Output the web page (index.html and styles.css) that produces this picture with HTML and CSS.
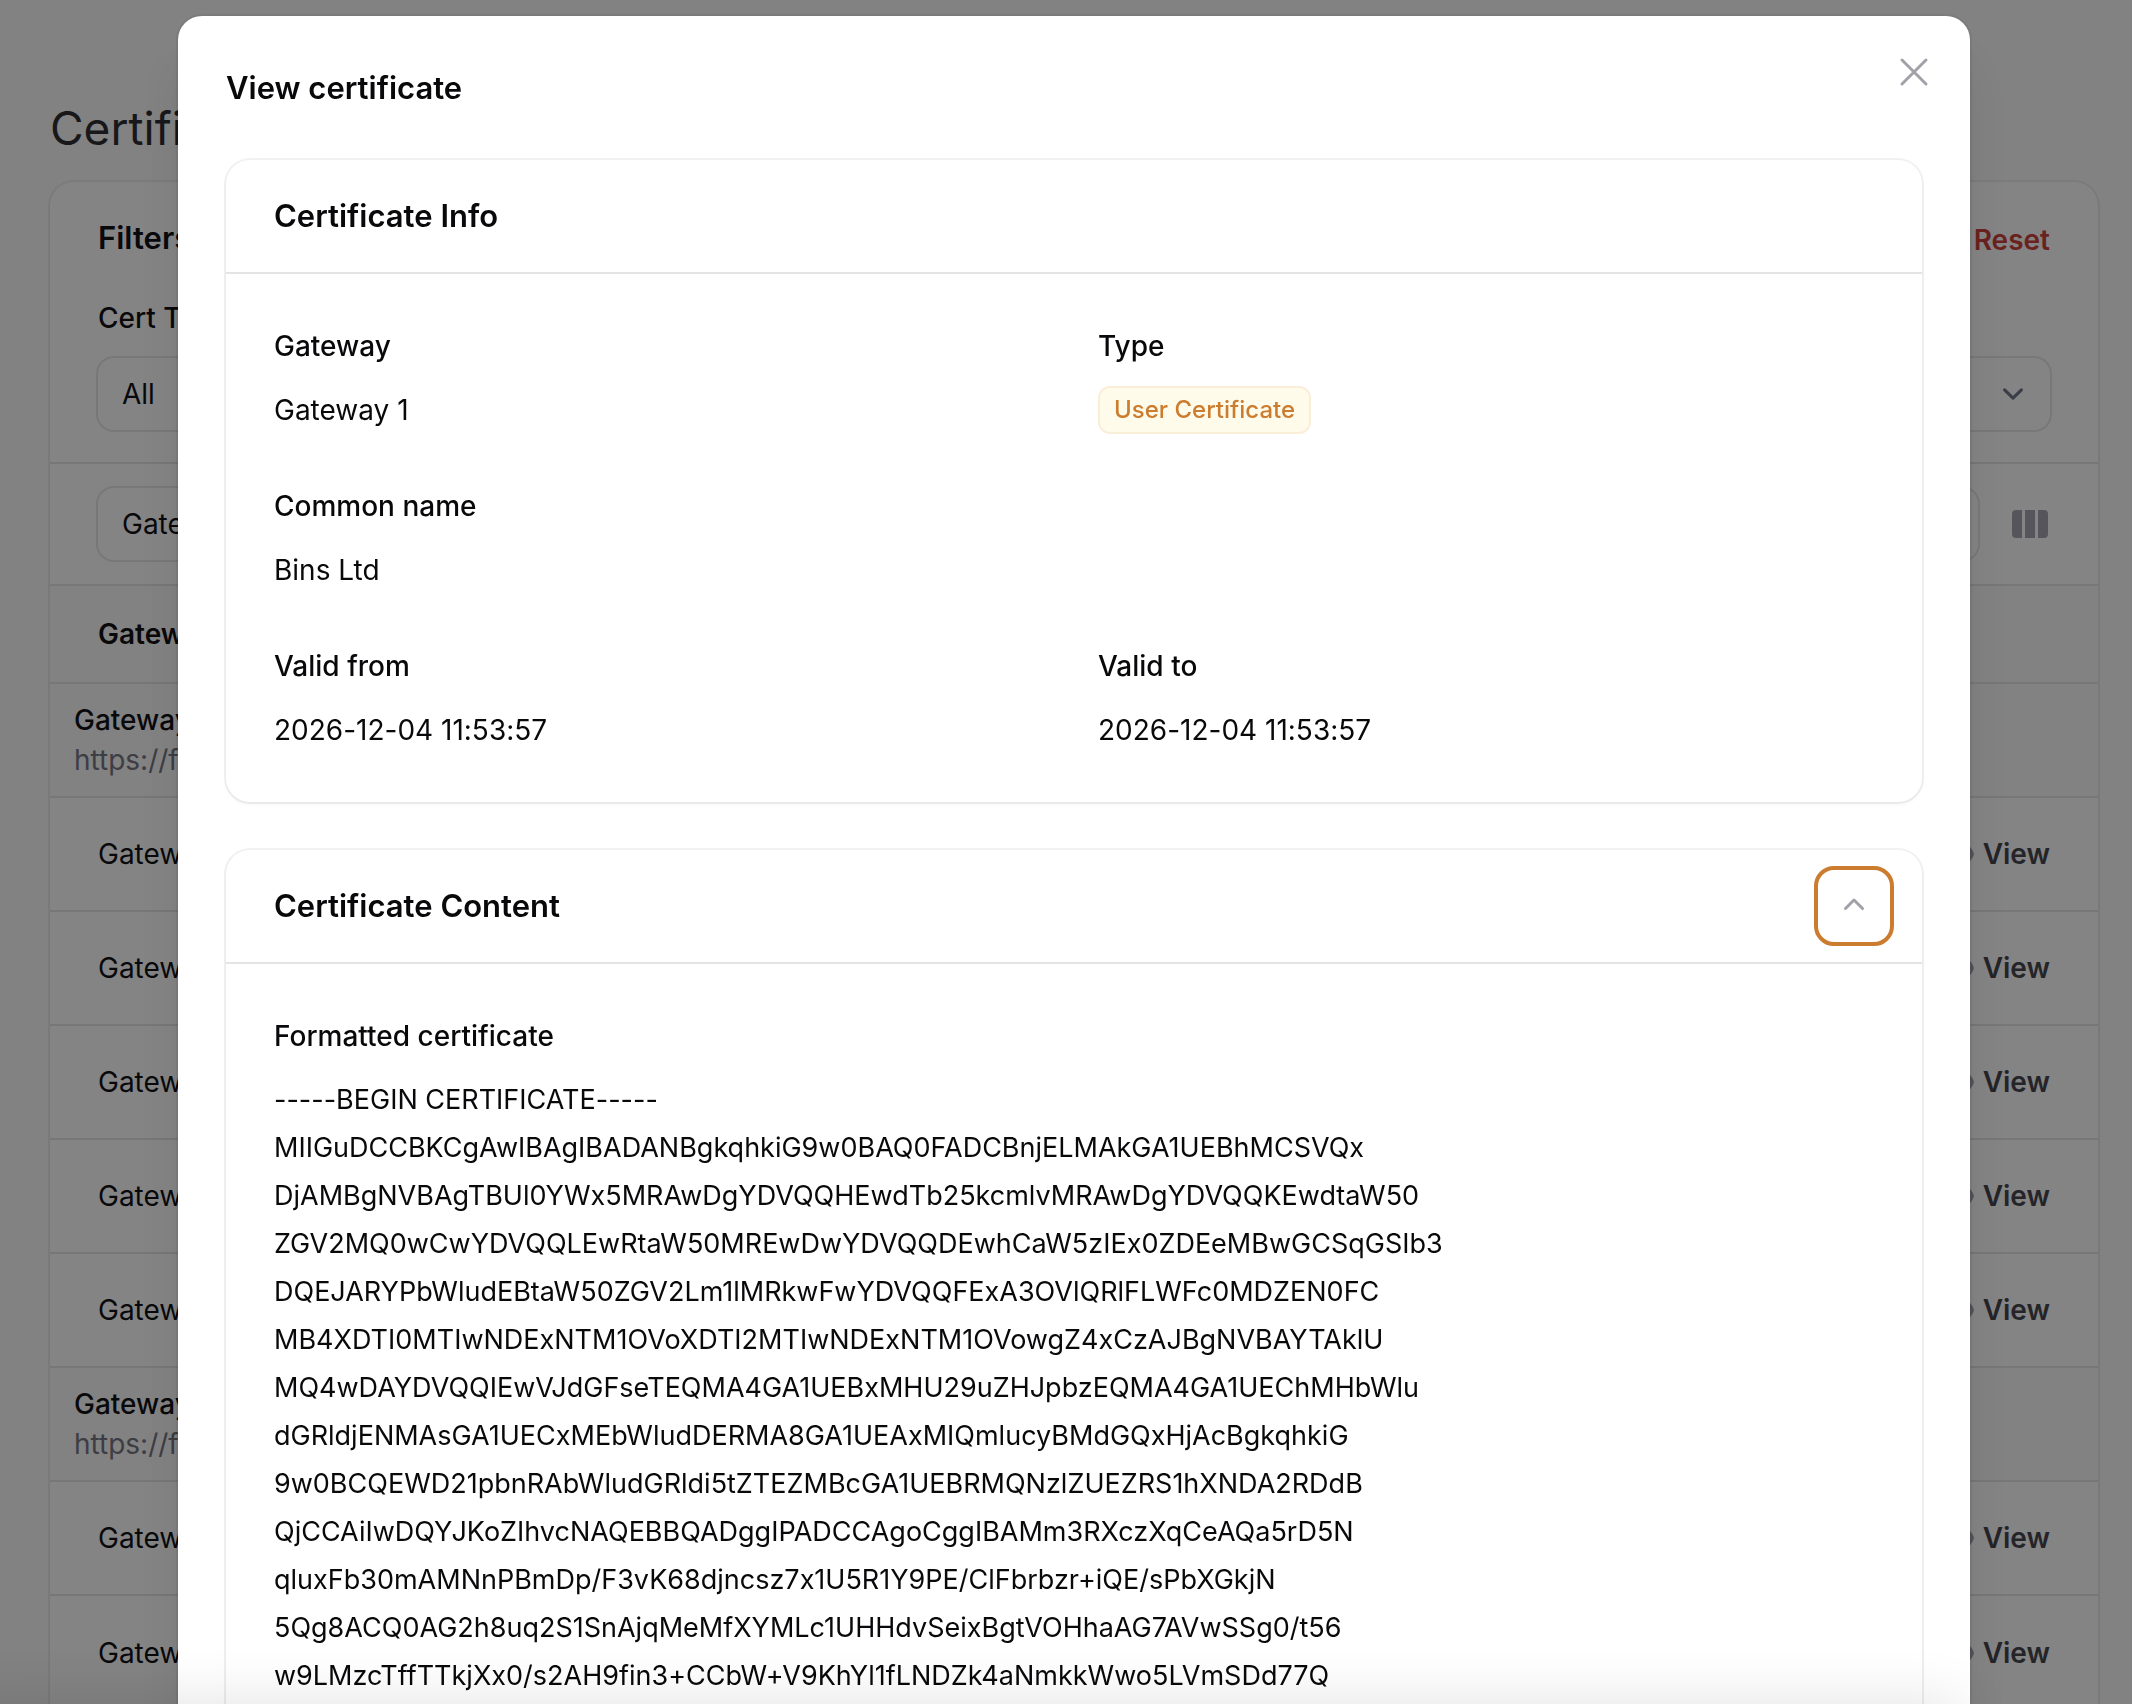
FILE: index.html
```html
<!DOCTYPE html>
<html lang="en">
<head>
<meta charset="utf-8">
<meta name="viewport" content="width=device-width, initial-scale=1">
<title>Certificates</title>
<link rel="stylesheet" href="styles.css">
</head>
<body>
<svg class="sprite" aria-hidden="true">
  <symbol id="eye" viewBox="0 0 20 20">
    <path d="M10 12.5a2.500 2.500 0 1 0 0-5 2.500 2.500 0 0 0 0 5Z"/>
    <path fill-rule="evenodd" d="M.664 10.590a1.651 1.651 0 0 1 0-1.186A10.004 10.004 0 0 1 10 3c4.257 0 7.893 2.660 9.336 6.410.147.381.146.804 0 1.186A10.004 10.004 0 0 1 10 17c-4.257 0-7.893-2.660-9.336-6.410ZM14 10a4 4 0 1 1-8 0 4 4 0 0 1 8 0Z"/>
  </symbol>
</svg>

<main class="page">
  <h1 class="page-title">Certificates</h1>
  <section class="panel">
    <div class="filters">
      <div class="filters-head">
        <h2 class="heading">Filters</h2>
        <button class="reset" type="button">Reset</button>
      </div>
      <label class="label" for="cert-type">Cert Type</label>
      <div class="select-wrap">
        <select class="select" id="cert-type"><option>All</option></select>
        <svg class="chevron" viewBox="0 0 20 20" aria-hidden="true"><path d="M6 8l4 4 4-4"/></svg>
      </div>
    </div>
    <div class="toolbar">
      <div class="select-wrap">
        <select class="select" aria-label="Group by"><option>Gateway</option></select>
        <svg class="chevron" viewBox="0 0 20 20" aria-hidden="true"><path d="M6 8l4 4 4-4"/></svg>
      </div>
      <button class="columns" type="button" aria-label="Toggle columns">
        <svg width="36" height="28" viewBox="0 0 36 28" aria-hidden="true"><path d="M4 0h6v28H4a4 4 0 0 1-4-4V4a4 4 0 0 1 4-4ZM13 0h10v28H13ZM26 0h6a4 4 0 0 1 4 4v20a4 4 0 0 1-4 4h-6Z"/></svg>
      </button>
    </div>
    <table class="table">
      <thead><tr><th>Gateway</th><th></th></tr></thead>
      <tbody>
        <tr class="group"><td colspan="2"><div class="group-title">Gateway 1</div><div class="group-url">https://fa</div></td></tr>
        <tr><td>Gateway 1</td><td><button class="view" type="button"><svg aria-hidden="true"><use href="#eye"/></svg>View</button></td></tr>
        <tr><td>Gateway 1</td><td><button class="view" type="button"><svg aria-hidden="true"><use href="#eye"/></svg>View</button></td></tr>
        <tr><td>Gateway 1</td><td><button class="view" type="button"><svg aria-hidden="true"><use href="#eye"/></svg>View</button></td></tr>
        <tr><td>Gateway 1</td><td><button class="view" type="button"><svg aria-hidden="true"><use href="#eye"/></svg>View</button></td></tr>
        <tr><td>Gateway 1</td><td><button class="view" type="button"><svg aria-hidden="true"><use href="#eye"/></svg>View</button></td></tr>
        <tr class="group"><td colspan="2"><div class="group-title">Gateway 2</div><div class="group-url">https://fa</div></td></tr>
        <tr><td>Gateway 2</td><td><button class="view" type="button"><svg aria-hidden="true"><use href="#eye"/></svg>View</button></td></tr>
        <tr><td>Gateway 2</td><td><button class="view" type="button"><svg aria-hidden="true"><use href="#eye"/></svg>View</button></td></tr>
      </tbody>
    </table>
  </section>
</main>

<div class="overlay">
  <div class="modal" role="dialog" aria-modal="true" aria-labelledby="modal-title">
    <button class="close" type="button" aria-label="Close">
      <svg viewBox="0 0 24 24" aria-hidden="true"><path d="M6 18L18 6M6 6l12 12"/></svg>
    </button>
    <h2 class="heading" id="modal-title">View certificate</h2>

    <section class="card">
      <header class="card-head"><h3 class="heading">Certificate Info</h3></header>
      <dl class="entries">
        <div class="entry"><dt>Gateway</dt><dd>Gateway 1</dd></div>
        <div class="entry"><dt>Type</dt><dd><span class="badge">User Certificate</span></dd></div>
        <div class="entry wide"><dt>Common name</dt><dd>Bins Ltd</dd></div>
        <div class="entry"><dt>Valid from</dt><dd>2026-12-04 11:53:57</dd></div>
        <div class="entry"><dt>Valid to</dt><dd>2026-12-04 11:53:57</dd></div>
      </dl>
    </section>

    <section class="card">
      <header class="card-head">
        <h3 class="heading">Certificate Content</h3>
        <button class="collapse" type="button" aria-label="Collapse" aria-expanded="true">
          <svg viewBox="0 0 20 20" aria-hidden="true"><path fill-rule="evenodd" d="M9.470 6.470a.750.750 0 0 1 1.060 0l4.250 4.250a.750.750 0 1 1-1.060 1.060L10 8.060l-3.720 3.720a.750.750 0 0 1-1.060-1.060l4.250-4.250Z"/></svg>
        </button>
      </header>
      <dl class="entries">
        <div class="entry wide">
          <dt>Formatted certificate</dt>
          <dd class="pem">-----BEGIN CERTIFICATE-----<br>
MIIGuDCCBKCgAwIBAgIBADANBgkqhkiG9w0BAQ0FADCBnjELMAkGA1UEBhMCSVQx<br>
DjAMBgNVBAgTBUl0YWx5MRAwDgYDVQQHEwdTb25kcmlvMRAwDgYDVQQKEwdtaW50<br>
ZGV2MQ0wCwYDVQQLEwRtaW50MREwDwYDVQQDEwhCaW5zIEx0ZDEeMBwGCSqGSIb3<br>
DQEJARYPbWludEBtaW50ZGV2Lm1lMRkwFwYDVQQFExA3OVlQRlFLWFc0MDZEN0FC<br>
MB4XDTI0MTIwNDExNTM1OVoXDTI2MTIwNDExNTM1OVowgZ4xCzAJBgNVBAYTAklU<br>
MQ4wDAYDVQQIEwVJdGFseTEQMA4GA1UEBxMHU29uZHJpbzEQMA4GA1UEChMHbWlu<br>
dGRldjENMAsGA1UECxMEbWludDERMA8GA1UEAxMIQmlucyBMdGQxHjAcBgkqhkiG<br>
9w0BCQEWD21pbnRAbWludGRldi5tZTEZMBcGA1UEBRMQNzlZUEZRS1hXNDA2RDdB<br>
QjCCAiIwDQYJKoZIhvcNAQEBBQADggIPADCCAgoCggIBAMm3RXczXqCeAQa5rD5N<br>
qluxFb30mAMNnPBmDp/F3vK68djncsz7x1U5R1Y9PE/ClFbrbzr+iQE/sPbXGkjN<br>
5Qg8ACQ0AG2h8uq2S1SnAjqMeMfXYMLc1UHHdvSeixBgtVOHhaAG7AVwSSg0/t56<br>
w9LMzcTffTTkjXx0/s2AH9fin3+CCbW+V9KhYl1fLNDZk4aNmkkWwo5LVmSDd77Q</dd>
        </div>
      </dl>
    </section>
  </div>
</div>
<div class="bottom-fade"></div>
</body>
</html>
```
FILE: styles.css
```css
* { box-sizing: border-box; }

body {
  margin: 0;
  height: 100vh;
  overflow: hidden;
  background: #fafafa;
  color: #09090b;
  font: 400 28px/48px Inter, sans-serif;
  font-feature-settings: "calt" 0;
}

h1, h2, h3, dl, dd { margin: 0; }

button, select { font: inherit; color: inherit; }

button {
  display: flex;
  align-items: center;
  padding: 0;
  border: 0;
  background: none;
}

.sprite { position: absolute; width: 0; height: 0; }

.heading { font-size: 31px; line-height: 48px; font-weight: 600; }

/* Certificates list */
.page { padding: 96px 34px 0 50px; }

.page-title {
  margin-bottom: 22px;
  font-size: 46px;
  line-height: 64px;
  font-weight: 400;
  color: #27272a;
}

.panel {
  overflow: hidden;
  padding-bottom: 48px;
  border-radius: 24px;
  background: #fff;
  box-shadow: 0 0 0 2px rgba(9, 9, 11, .05), 0 2px 4px rgba(0, 0, 0, .05);
}

.filters { padding: 32px 48px; }

.filters-head {
  display: flex;
  justify-content: space-between;
  align-items: flex-end;
  margin-bottom: 32px;
}

.reset { font-weight: 600; line-height: 44px; color: #cb3a33; }

.label { display: block; margin-bottom: 16px; line-height: 48px; font-weight: 500; }

.select-wrap { position: relative; flex: 1; }

.select {
  display: block;
  width: 100%;
  height: 72px;
  padding: 0 24px;
  border: 0;
  border-radius: 16px;
  background: #fff;
  box-shadow: 0 0 0 2px rgba(9, 9, 11, .1);
  appearance: none;
}

.chevron {
  position: absolute;
  top: 15px;
  right: 16px;
  width: 42px;
  height: 42px;
  fill: none;
  stroke: #6b7280;
  stroke-width: 1.5;
  stroke-linecap: round;
  stroke-linejoin: round;
}

.toolbar {
  display: flex;
  align-items: center;
  gap: 34px;
  padding: 24px 50px 24px 48px;
  border-top: 2px solid #e4e4e7;
}

.columns { fill: #a1a1aa; }

.table { width: 100%; border-collapse: collapse; }
.table th, .table td { border-top: 2px solid #e4e4e7; padding: 0 48px; text-align: left; }
.table th { height: 98px; background: #fafafa; font-weight: 600; }
.table td { height: 114px; }
.table .group td { padding: 0 24px; background: #fafafa; line-height: 40px; }
.group-title { font-weight: 500; }
.group-url { color: #71717a; }

.view { gap: 8px; margin-left: auto; font-weight: 600; color: #3f3f46; }
.view svg { width: 40px; height: 40px; fill: #a1a1aa; }

/* Dialog */
.overlay {
  position: fixed;
  inset: 0;
  overflow: hidden;
  padding: 16px 0 0 16px;
  background: rgba(9, 9, 11, .5);
}

.modal {
  position: relative;
  display: flex;
  flex-direction: column;
  gap: 48px;
  max-width: 1792px;
  margin: 0 auto;
  padding: 48px;
  border-radius: 24px;
  background: #fff;
  box-shadow: 0 0 0 2px rgba(9, 9, 11, .05), 0 40px 50px -10px rgba(0, 0, 0, .1), 0 16px 20px -12px rgba(0, 0, 0, .1);
}

.close { position: absolute; top: 32px; right: 32px; }
.close svg { width: 48px; height: 48px; fill: none; stroke: #a1a1aa; stroke-width: 1.5; stroke-linecap: round; }

.card {
  border-radius: 24px;
  background: #fff;
  box-shadow: 0 0 0 2px rgba(9, 9, 11, .05), 0 2px 4px rgba(0, 0, 0, .05);
}

.card-head {
  display: flex;
  align-items: center;
  justify-content: space-between;
  height: 112px;
  padding: 0 28px 0 48px;
}

.collapse {
  justify-content: center;
  width: 80px;
  height: 80px;
  border: 4px solid #cc7c2e;
  border-radius: 20px;
}
.collapse svg { width: 40px; height: 40px; fill: #a1a1aa; }

.entries {
  display: grid;
  grid-template-columns: 1fr 1fr;
  gap: 48px;
  padding: 48px;
  border-top: 2px solid #e4e4e7;
}

.entry { display: flex; flex-direction: column; gap: 16px; }
.wide { grid-column: 1 / -1; }
.entry dt { font-weight: 500; }
.pem { font-size: 27px; }

.badge {
  display: block;
  width: max-content;
  padding: 8px 16px;
  border-radius: 12px;
  background: #fffbeb;
  box-shadow: inset 0 0 0 2px rgba(204, 124, 46, .1);
  color: #cc7c2e;
  font-size: 24px;
  line-height: 32px;
  font-weight: 500;
}

/* Soft shadow along the bottom edge of the window */
.bottom-fade {
  position: fixed;
  inset: auto 10% 0 0;
  height: 0;
  box-shadow: 0 40px 60px 40px rgba(0, 0, 0, .12);
  pointer-events: none;
}
```
